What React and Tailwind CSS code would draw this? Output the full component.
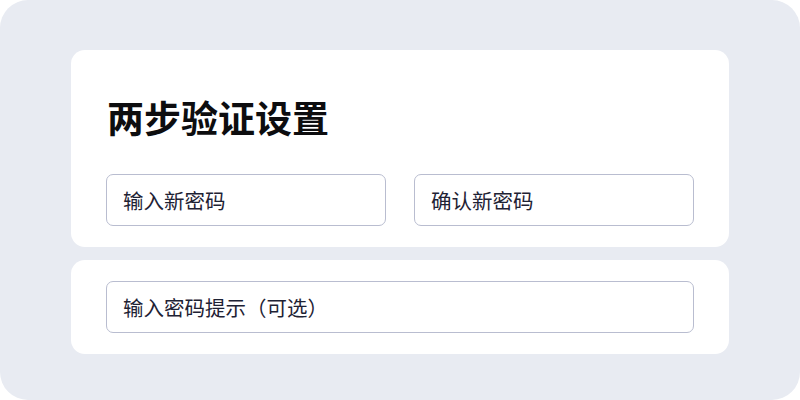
import React from 'react';

const font = { fontFamily: '"Noto Sans CJK SC", "Noto Sans", sans-serif' };

function Field({ placeholder, className = '' }) {
  return (
    <div
      className={`h-[52px] flex items-center pl-[16px] rounded-[7px] border border-[#b9bdd0] bg-white text-[20.5px] text-[#1e2234] ${className}`}
    >
      {placeholder}
    </div>
  );
}

export default function App() {
  return (
    <div className="w-[800px] h-[400px] bg-white" style={font}>
      <div className="w-full h-full rounded-[28px] bg-[#e8ebf2] pt-[50px] px-[71px] flex flex-col gap-[13px]">
        <div className="bg-white rounded-[14px] pt-[48px] pb-[21px] px-[35px]">
          <h1 className="text-[37px] leading-[38px] font-bold text-[#0d0d0f] pl-[1px]">两步验证设置</h1>
          <div className="mt-[38px] grid grid-cols-2 gap-[28px]">
            <Field placeholder="输入新密码" />
            <Field placeholder="确认新密码" />
          </div>
        </div>
        <div className="bg-white rounded-[14px] py-[21px] px-[35px]">
          <Field placeholder="输入密码提示（可选）" />
        </div>
      </div>
    </div>
  );
}
